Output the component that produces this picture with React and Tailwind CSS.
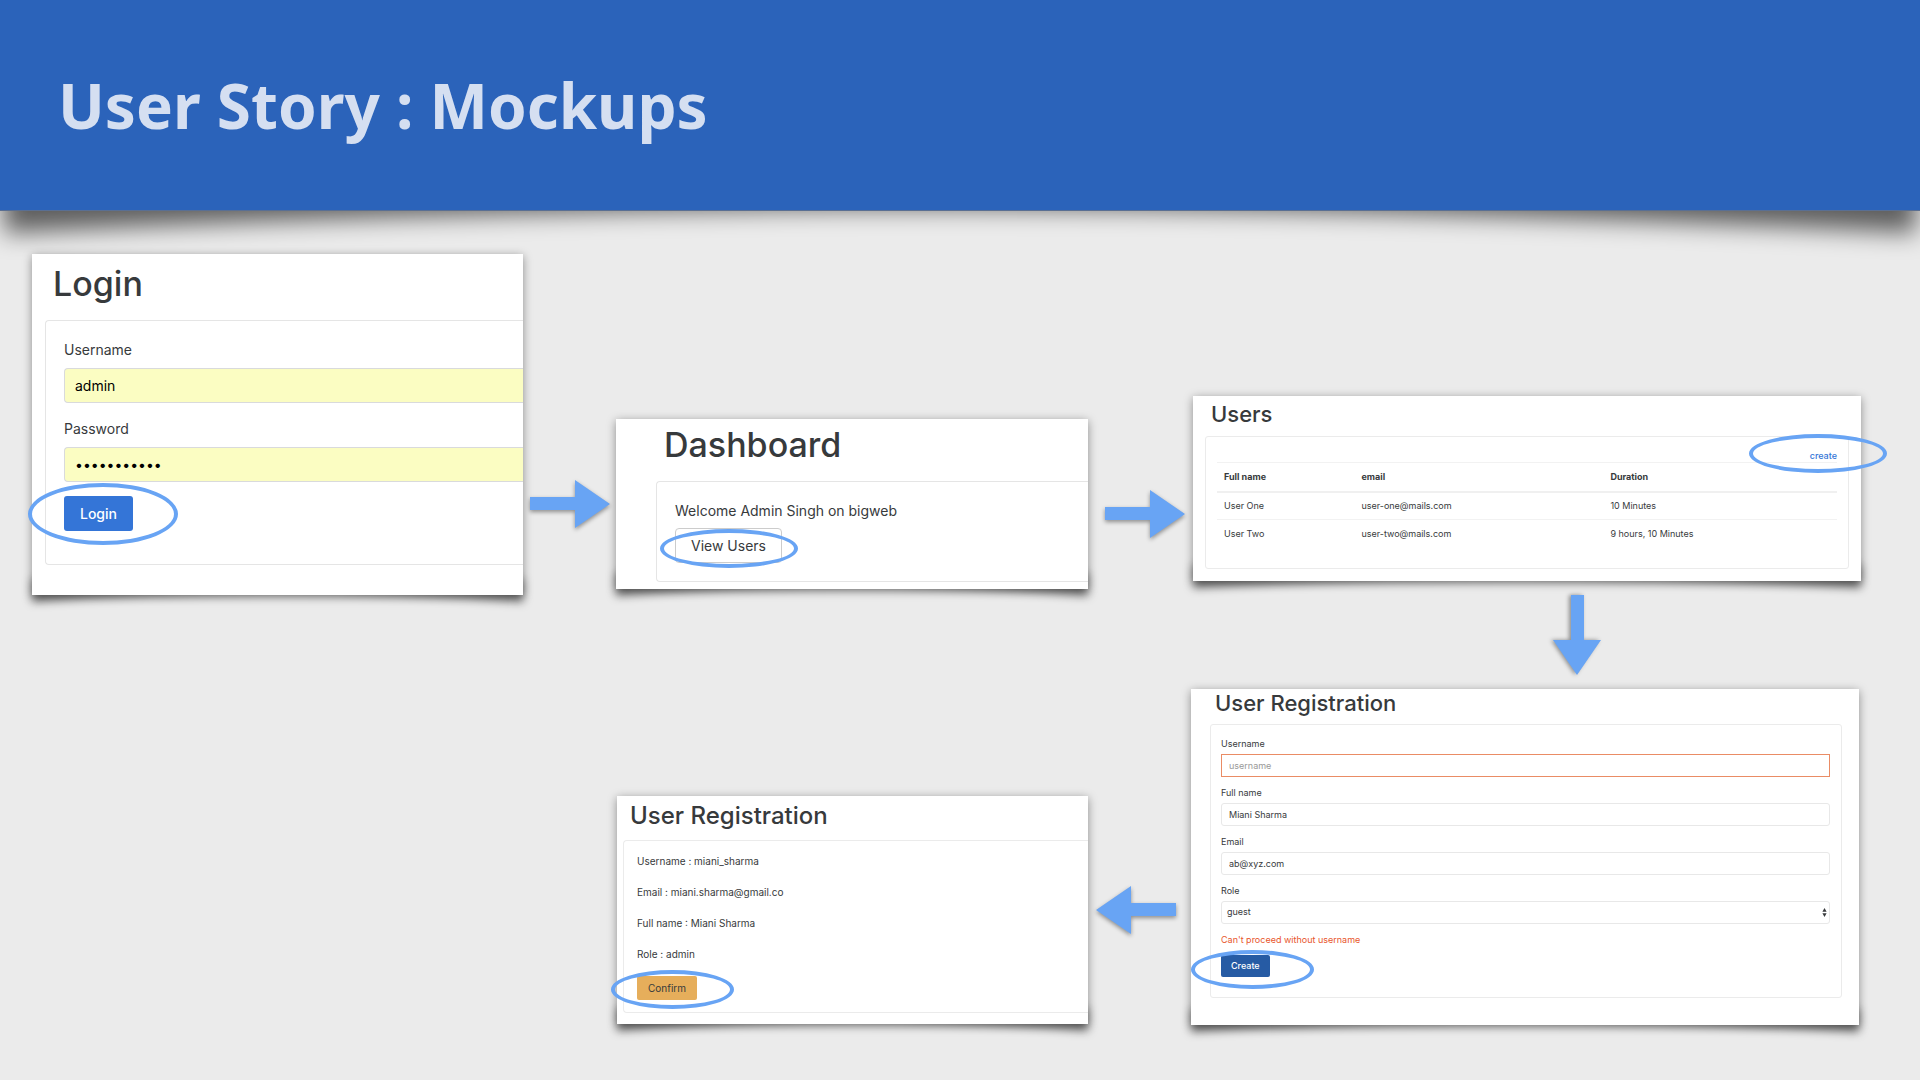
import React from "react";

function Arrow({ className }) {
  return (
    <svg
      viewBox="0 0 80 48"
      className={`h-12 w-20 shrink-0 overflow-visible drop-shadow-[0_2px_2px_rgba(0,0,0,0.4)] ${className}`}
      aria-hidden="true"
    >
      <path d="M0 17H45V0L80 24L45 48V30H0Z" fill="#68a4f4" />
    </svg>
  );
}

function Ring({ className }) {
  return (
    <span
      aria-hidden="true"
      className={`pointer-events-none absolute rounded-[50%] border-4 border-[#68a4f4] ${className}`}
    />
  );
}

function Card({ className, children }) {
  return (
    <section className={`relative isolate text-[#373a3c] ${className}`}>
      <svg
        viewBox="0 0 100 24"
        preserveAspectRatio="none"
        aria-hidden="true"
        className="absolute inset-x-0 -bottom-2 -z-10 h-6 w-full overflow-visible blur-[5px]"
      >
        <path d="M0 0H100V23Q50 4 0 23Z" fill="#000" fillOpacity="0.5" />
      </svg>
      <div className="bg-white shadow-[0_2px_9px_rgba(0,0,0,0.4)]">{children}</div>
    </section>
  );
}

function LoginField({ id, label, type, value }) {
  return (
    <div className="mb-4">
      <label htmlFor={id} className="mb-2 block text-[14px] leading-5">
        {label}
      </label>
      <input
        id={id}
        type={type}
        defaultValue={value}
        className="block h-[35px] w-full rounded-l border border-r-0 border-[#d9dadc] bg-[#fbfdc2] px-2.5 text-[14px] text-black outline-none"
      />
    </div>
  );
}

function LoginCard() {
  return (
    <Card className="mt-[43px]">
      <div className="pt-2.5 pb-[30px] pl-[13px]">
        <h2 className="pl-2 text-[34px] leading-10 font-medium">Login</h2>
        <form className="mt-4 rounded-l border border-r-0 border-[#e5e5e5] pt-[19px] pb-[33px] pl-[18px]">
          <LoginField id="login-user" label="Username" type="text" value="admin" />
          <LoginField id="login-pass" label="Password" type="password" value="bigweb12345" />
          <div className="relative -mt-0.5 w-fit">
            <button
              type="button"
              className="block h-[35px] rounded-[3px] bg-[#3475d7] px-4 text-[14px] font-medium text-white"
            >
              Login
            </button>
            <Ring className="-top-[13px] -left-9 h-[62px] w-[150px]" />
          </div>
        </form>
      </div>
    </Card>
  );
}

function DashboardCard() {
  return (
    <Card className="mt-[208px]">
      <div className="pt-1.5 pb-[7px] pl-10">
        <h2 className="pl-2 text-[34px] leading-10 font-medium">Dashboard</h2>
        <div className="mt-4 rounded-l border border-r-0 border-[#e5e5e5] pt-[19px] pb-[18px] pl-[18px]">
          <p className="text-[14px] leading-5">Welcome Admin Singh on bigweb</p>
          <div className="relative mt-[7px] w-fit">
            <button
              type="button"
              className="block h-[35px] rounded border border-[#ccc] bg-white px-[15px] text-[14px]"
            >
              View Users
            </button>
            <Ring className="top-px -left-[15px] h-[39px] w-[138px]" />
          </div>
        </div>
      </div>
    </Card>
  );
}

const users = [
  { name: "User One", email: "user-one@mails.com", duration: "10 Minutes" },
  { name: "User Two", email: "user-two@mails.com", duration: "9 hours, 10 Minutes" },
];

function UsersCard() {
  return (
    <Card className="mt-[185px] ml-0.5">
      <div className="px-3 pt-1.5 pb-3">
        <h2 className="pl-1.5 text-[22px] leading-6 font-medium">Users</h2>
        <div className="mt-2.5 rounded-[3px] border border-[#ebebeb] px-[11px] pt-[13px] pb-5">
          <div className="relative ml-auto w-fit text-[9px] leading-3">
            <a href="#create" className="block font-medium text-[#3475d7]">
              create
            </a>
            <Ring className="-top-4 -right-[50px] h-[39px] w-[138px]" />
          </div>
          <table className="w-full table-fixed text-left text-[9px] leading-3">
            <thead>
              <tr className="h-[29px] border-t border-b-2 border-t-[#f2f2f2] border-b-[#f0f0f0]">
                <th className="w-[22%] pl-[7px] font-bold">Full name</th>
                <th className="w-[40%] pl-2 font-bold">email</th>
                <th className="w-[38%] pl-[9px] font-bold">Duration</th>
              </tr>
            </thead>
            <tbody>
              {users.map((u) => (
                <tr key={u.email} className="h-7 border-b border-[#f2f2f2] last:border-b-0">
                  <td className="pl-[7px]">{u.name}</td>
                  <td className="pl-2">{u.email}</td>
                  <td className="pl-[9px]">{u.duration}</td>
                </tr>
              ))}
            </tbody>
          </table>
        </div>
      </div>
    </Card>
  );
}

function SmallField({ id, label, children }) {
  return (
    <div className="mb-[9px]">
      <label htmlFor={id} className="mb-[3px] block leading-[14px]">
        {label}
      </label>
      {children}
    </div>
  );
}

function RegistrationCard() {
  return (
    <Card className="mr-0.5">
      <div className="pt-0.5 pr-[17px] pb-[27px] pl-[19px]">
        <h2 className="pl-[5px] text-[22px] leading-6 font-medium">User Registration</h2>
        <form className="mt-[9px] rounded-[3px] border border-[#ebebeb] pt-3 pr-[11px] pb-5 pl-2.5 text-[9px]">
          <SmallField id="reg-user" label="Username">
            <input
              id="reg-user"
              placeholder="username"
              className="block h-[23px] w-full border border-[#ea8c65] px-[7px] outline-none placeholder:text-[#999]"
            />
          </SmallField>
          <SmallField id="reg-name" label="Full name">
            <input
              id="reg-name"
              defaultValue="Miani Sharma"
              className="block h-[23px] w-full rounded-[3px] border border-[#e8e8e8] px-[7px] outline-none"
            />
          </SmallField>
          <SmallField id="reg-email" label="Email">
            <input
              id="reg-email"
              defaultValue="ab@xyz.com"
              className="block h-[23px] w-full rounded-[3px] border border-[#e8e8e8] px-[7px] outline-none"
            />
          </SmallField>
          <SmallField id="reg-role" label="Role">
            <div className="relative">
              <select
                id="reg-role"
                defaultValue="guest"
                className="block h-[23px] w-full appearance-none rounded-[3px] border border-[#e8e8e8] px-[5px] outline-none"
              >
                <option>guest</option>
                <option>admin</option>
              </select>
              <svg
                viewBox="0 0 5 9"
                className="pointer-events-none absolute top-[7px] right-[3px] h-[9px] w-[5px]"
                aria-hidden="true"
              >
                <path d="M2.5 0L4.6 3.8H.4ZM2.5 9L4.6 5.2H.4Z" fill="#373a3c" />
              </svg>
            </div>
          </SmallField>
          <p className="leading-[14px] text-[#e8552b]">Can't proceed without username</p>
          <div className="relative mt-2 w-fit">
            <button
              type="button"
              className="block h-[22px] rounded-[2px] bg-[#265ba4] px-2.5 font-medium text-white"
            >
              Create
            </button>
            <Ring className="-top-[5px] -left-[30px] h-[39px] w-[123px]" />
          </div>
        </form>
      </div>
    </Card>
  );
}

const summary = [
  "Username : miani_sharma",
  "Email : miani.sharma@gmail.co",
  "Full name : Miani Sharma",
  "Role : admin",
];

function ConfirmCard() {
  return (
    <Card className="mt-[207px] ml-px">
      <div className="pt-2 pb-[11px] pl-1.5">
        <h2 className="pl-[7px] text-[24px] leading-6 font-medium">User Registration</h2>
        <div className="mt-3 rounded-l border border-r-0 border-[#ebebeb] pt-[5px] pb-3 pl-[13px] text-[10px]">
          {summary.map((line) => (
            <p key={line} className="leading-[31px]">
              {line}
            </p>
          ))}
          <div className="relative mt-1.5 w-fit">
            <button type="button" className="block h-6 rounded-[2px] bg-[#e6ae5b] px-[11px]">
              Confirm
            </button>
            <Ring className="-top-1.5 -left-[26px] h-[39px] w-[123px]" />
          </div>
        </div>
      </div>
    </Card>
  );
}

export default function App() {
  return (
    <div className="min-h-screen bg-[#ebebeb] font-['Inter','Liberation_Sans',sans-serif]">
      <header className="relative isolate">
        <div className="absolute inset-x-1 -bottom-6 -z-10 h-15">
          <svg
            viewBox="0 0 100 60"
            preserveAspectRatio="none"
            aria-hidden="true"
            className="block h-full w-full overflow-visible blur-[12px]"
          >
            <path d="M0 0H100V58Q50 8 0 58Z" fill="#000" fillOpacity="0.6" />
          </svg>
        </div>
        <div className="border-b border-[#5a6f92] bg-[#2b63ba] px-[58px] pt-[65px] pb-[65px]">
          <h1 className="font-['Noto_Sans','Open_Sans',sans-serif] text-[62px] leading-20 font-bold text-[#d5dff1]">
            User Story : Mockups
          </h1>
        </div>
      </header>
      <main className="grid grid-cols-[491fr_93fr_472fr_103fr_670fr] items-start pr-[59px] pb-14 pl-8">
        <LoginCard />
        <div className="flex justify-center pt-[269px]">
          <Arrow className="" />
        </div>
        <div>
          <DashboardCard />
          <ConfirmCard />
        </div>
        <div className="flex flex-col items-center pt-[279px]">
          <Arrow className="ml-2.5" />
          <Arrow className="mt-[348px] mr-2 -scale-x-100" />
        </div>
        <div>
          <UsersCard />
          <div className="flex h-[108px] items-center justify-center pl-[102px]">
            <Arrow className="rotate-90" />
          </div>
          <RegistrationCard />
        </div>
      </main>
    </div>
  );
}
